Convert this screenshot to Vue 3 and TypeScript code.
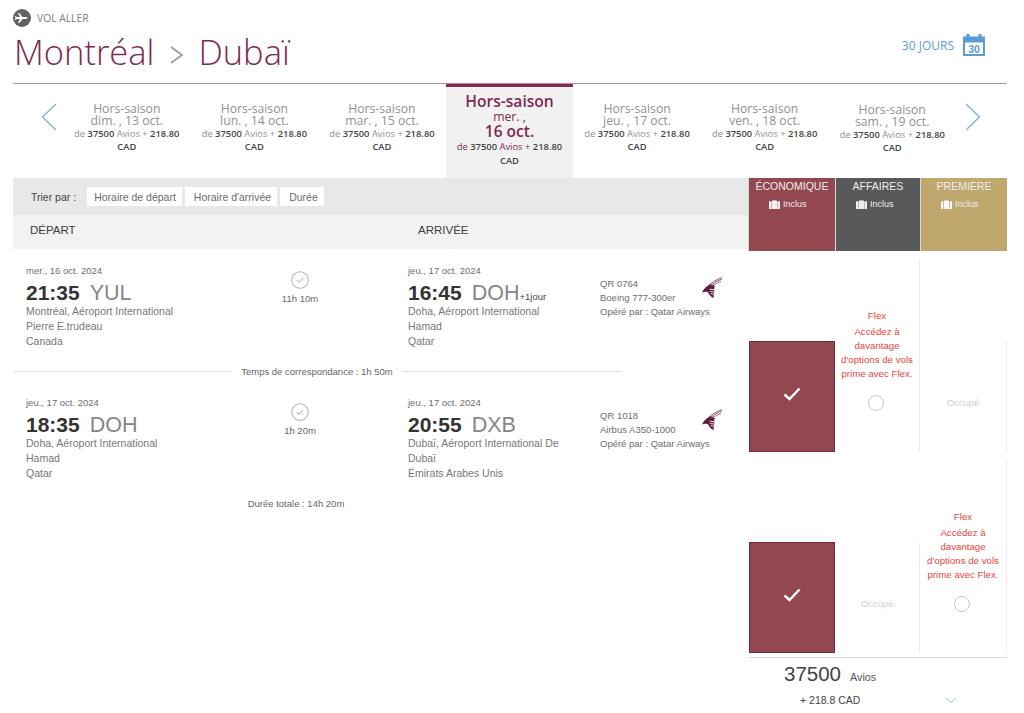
<template>
  <div class="page">
    <header class="head">
      <div class="head-left">
        <div class="leg">
          <svg class="leg-icon" width="18" height="18" viewBox="0 0 18 18">
            <circle cx="9" cy="9" r="9" fill="#626365" />
            <path d="M3.600 8.100h3.200L5 3.900h1.300l3.300 4.200h3.100c1 0 1.700.4 1.700.9s-.7.9-1.700.9H9.600l-3.300 4.200H5l1.800-4.200H3.600l-.8 1.200H2l.5-2.100L2 6.900h.8z" fill="#fff" />
          </svg>
          <span>VOL ALLER</span>
        </div>
        <h1 class="route">
          <span>Montréal</span>
          <svg class="route-sep" width="14" height="20" viewBox="0 0 14 20">
            <path d="M1 2l11 8-11 8" fill="none" stroke="#9a9a9a" stroke-width="1.800" />
          </svg>
          <span>Dubaï</span>
        </h1>
      </div>
      <div class="days">
        <span>30 JOURS</span>
        <svg width="24" height="24" viewBox="0 0 24 24">
          <path d="M1 3.500h22V23H1z" fill="#5b9bd8" />
          <rect x="3" y="9.500" width="18" height="11.500" fill="#fff" />
          <circle cx="6" cy="2.500" r="1.800" fill="#5b9bd8" />
          <circle cx="18" cy="2.500" r="1.800" fill="#5b9bd8" />
          <text x="12" y="19.500" text-anchor="middle" class="cal-num">30</text>
        </svg>
      </div>
    </header>

    <nav class="dates">
      <svg class="arrow" width="16" height="28" viewBox="0 0 16 28">
        <path d="M15 1L1.500 14 15 27" fill="none" stroke="#7fb0de" stroke-width="1.300" />
      </svg>
      <div class="date-list">
        <div v-for="d in dates" :key="d.day" class="date" :class="{ active: d.active, low: d.low }">
          <div class="season">Hors-saison</div>
          <template v-if="d.active">
            <div class="weekday">{{ d.week }} ,</div>
            <div class="day">{{ d.day }}</div>
          </template>
          <div v-else class="weekday">{{ d.week }} , {{ d.day }}</div>
          <div class="price">de <b>37500</b> Avios + <b>218.80</b></div>
          <div class="cad">CAD</div>
        </div>
      </div>
      <svg class="arrow" width="16" height="28" viewBox="0 0 16 28">
        <path d="M1 1l13.500 13L1 27" fill="none" stroke="#7fb0de" stroke-width="1.300" />
      </svg>
    </nav>

    <main class="main">
      <section class="flights">
        <div class="sort">
          <span class="sort-label">Trier par :</span>
          <button v-for="s in sorts" :key="s" class="sort-btn">{{ s }}</button>
        </div>
        <div class="cols">
          <span>DÉPART</span>
          <span>ARRIVÉE</span>
        </div>

        <template v-for="(seg, i) in segments" :key="seg.flight">
          <div class="segment">
            <div class="place">
              <div class="when">{{ seg.depDate }}</div>
              <div class="time"><b>{{ seg.depTime }}</b><span class="code">{{ seg.depCode }}</span></div>
              <div class="addr">{{ seg.depAddr }}</div>
              <div class="addr">{{ seg.depCountry }}</div>
            </div>
            <div class="duration">
              <svg width="18" height="18" viewBox="0 0 18 18">
                <circle cx="9" cy="9" r="8.200" fill="none" stroke="#b5b5b5" stroke-width="1.100" />
                <path d="M5.800 9l2.300 2.300 4.200-4.300" fill="none" stroke="#a5a5a5" stroke-width="1" />
              </svg>
              <span>{{ seg.duration }}</span>
            </div>
            <div class="place arr">
              <div class="when">{{ seg.arrDate }}</div>
              <div class="time">
                <b>{{ seg.arrTime }}</b><span class="code">{{ seg.arrCode }}</span><small v-if="seg.plusDay">+1jour</small>
              </div>
              <div class="addr">{{ seg.arrAddr }}</div>
              <div class="addr">{{ seg.arrCountry }}</div>
            </div>
            <div class="info">
              <div class="info-text">
                <div>{{ seg.flight }}</div>
                <div>{{ seg.plane }}</div>
                <div>Opéré par : Qatar Airways</div>
              </div>
              <svg class="oryx" width="20" height="21" viewBox="0 0 20 21">
                <path d="M0 15.500C1.500 12 4.500 9 8 7.500c2-.5 3.500.5 5 2.500l-1 .8.800 1.700-1 .5.900 2-1 .5.700 1.800-1 .4.500 3.300C8.500 20 7 17.500 6 15.300 4 14.500 2 14.800 0 15.500z" fill="#5f1b3e" />
                <path d="M6.500 8.500C10 5 15 2.500 20 .5M8 9c4-3.500 8-5.500 12-7M9.500 9.500c3.500-2.500 6.500-4 9.500-5" fill="none" stroke="#7b3a5c" stroke-width=".8" />
                <path d="M7.500 12.300l5 .3M7.800 14.500l4.800.5M8.500 16.700l3.800.3" stroke="#fff" stroke-width=".8" />
              </svg>
            </div>
          </div>
          <div v-if="i === 0" class="layover">
            <span>Temps de correspondance : 1h 50m</span>
          </div>
        </template>
        <div class="total">Durée totale : 14h 20m</div>
      </section>

      <aside class="fares">
        <div class="cabins">
          <div v-for="c in cabins" :key="c.name" class="cabin" :class="c.cls">
            <div class="cabin-name">{{ c.name }}</div>
            <div class="bag">
              <svg width="11" height="9" viewBox="0 0 11 9">
                <path d="M3.500 1.500V.5h4v1M0 1.500h11V9H0z" fill="#fff" fill-opacity=".9" stroke="#fff" stroke-width=".4" stroke-opacity=".6" />
                <path d="M2.500 1.500V9M8.500 1.500V9" stroke="#777" stroke-width=".7" opacity=".6" />
              </svg>
              <span>Inclus</span>
            </div>
          </div>
        </div>

        <div v-for="(row, r) in fareRows" :key="r" class="fare-row">
          <div class="fare picked">
            <svg width="18" height="14" viewBox="0 0 18 14">
              <path d="M1.500 7.500l5 4.500L16.500 1.500" fill="none" stroke="#fff" stroke-width="2.400" />
            </svg>
          </div>
          <template v-for="kind in row" :key="kind">
            <div v-if="kind === 'flex'" class="fare flex">
              <p class="flex-title">Flex</p>
              <p class="flex-text">Accédez à davantage d'options de vols prime avec Flex.</p>
              <span class="radio"></span>
            </div>
            <div v-else class="fare busy">Occupé</div>
          </template>
        </div>

        <div class="summary">
          <div class="sum-top"><span class="sum-num">37500</span><span class="sum-unit">Avios</span></div>
          <div class="sum-bottom">
            <span>+ 218.8 CAD</span>
            <svg width="12" height="7" viewBox="0 0 12 7">
              <path d="M1 1l5 4.500L11 1" fill="none" stroke="#c6d9ec" stroke-width="1.600" />
            </svg>
          </div>
        </div>
      </aside>
    </main>
  </div>
</template>

<script setup lang="ts">
interface DateCell {
  week: string;
  day: string;
  active?: boolean;
  low?: boolean;
}

interface Segment {
  depDate: string;
  depTime: string;
  depCode: string;
  depAddr: string;
  depCountry: string;
  duration: string;
  arrDate: string;
  arrTime: string;
  arrCode: string;
  arrAddr: string;
  arrCountry: string;
  plusDay?: boolean;
  flight: string;
  plane: string;
}

const dates: DateCell[] = [
  { week: 'dim.', day: '13 oct.' },
  { week: 'lun.', day: '14 oct.' },
  { week: 'mar.', day: '15 oct.' },
  { week: 'mer.', day: '16 oct.', active: true },
  { week: 'jeu.', day: '17 oct.' },
  { week: 'ven.', day: '18 oct.' },
  { week: 'sam.', day: '19 oct.', low: true },
];

const sorts = ['Horaire de départ', "Horaire d'arrivée", 'Durée'];

const segments: Segment[] = [
  {
    depDate: 'mer., 16 oct. 2024',
    depTime: '21:35',
    depCode: 'YUL',
    depAddr: 'Montréal, Aéroport International Pierre E.trudeau',
    depCountry: 'Canada',
    duration: '11h 10m',
    arrDate: 'jeu., 17 oct. 2024',
    arrTime: '16:45',
    arrCode: 'DOH',
    arrAddr: 'Doha, Aéroport International Hamad',
    arrCountry: 'Qatar',
    plusDay: true,
    flight: 'QR 0764',
    plane: 'Boeing 777-300er',
  },
  {
    depDate: 'jeu., 17 oct. 2024',
    depTime: '18:35',
    depCode: 'DOH',
    depAddr: 'Doha, Aéroport International Hamad',
    depCountry: 'Qatar',
    duration: '1h 20m',
    arrDate: 'jeu., 17 oct. 2024',
    arrTime: '20:55',
    arrCode: 'DXB',
    arrAddr: 'Dubaï, Aéroport International De Dubaï',
    arrCountry: 'Émirats Arabes Unis',
    flight: 'QR 1018',
    plane: 'Airbus A350-1000',
  },
];

const cabins = [
  { name: 'ÉCONOMIQUE', cls: 'eco' },
  { name: 'AFFAIRES', cls: 'biz' },
  { name: 'PREMIÈRE', cls: 'first' },
];

// business / first column for each leg
const fareRows = [
  ['flex', 'busy'],
  ['busy', 'flex'],
];
</script>

<style scoped>
.page {
  width: 1024px;
  height: 713px;
  overflow: hidden;
  padding: 0 17px 0 13px;
  box-sizing: border-box;
  font-family: "Liberation Sans", Arial, sans-serif;
  background: #fff;
}

.head {
  height: 83px;
  display: flex;
  justify-content: space-between;
  border-bottom: 1px solid #b78c9e;
  box-sizing: content-box;
}

.leg {
  display: flex;
  align-items: center;
  gap: 6px;
  padding-top: 9px;
  font: 10.300px "Open Sans", sans-serif;
  color: #808080;
}

.route {
  margin: 3px 0 0 1px;
  display: flex;
  align-items: center;
  font: 300 34.500px/44px "Open Sans", sans-serif;
  color: #7f2a52;
}

.route-sep {
  margin: 6px 14px 0 16px;
}

.days {
  display: flex;
  align-items: center;
  gap: 8px;
  height: 24px;
  margin: 33px 21px 0 0;
  font: 12px "Open Sans", sans-serif;
  color: #5b9bd8;
}

.cal-num {
  font: 700 10.500px "Liberation Sans", sans-serif;
  fill: #5b9bd8;
}

.dates {
  height: 94px;
  display: flex;
  align-items: flex-start;
  font-family: "Open Sans", sans-serif;
}

.arrow {
  flex: none;
  margin-top: 19px;
}

.dates .arrow:first-child {
  margin-left: 28px;
  margin-right: 6px;
}

.dates .arrow:last-child {
  margin-left: 9px;
}

.date-list {
  width: 893px;
  flex: none;
  display: grid;
  grid-template-columns: repeat(7, 1fr);
}

.date {
  height: 94px;
  box-sizing: border-box;
  padding-top: 19px;
  text-align: center;
  color: #8f9195;
  font-size: 12.200px;
  line-height: 12px;
}

.date.low {
  padding-top: 20px;
}

.price {
  font-size: 9.400px;
  line-height: 12px;
  color: #8f9195;
  margin-top: 1px;
  white-space: nowrap;
}

.price b,
.cad {
  color: #444;
  font-weight: 600;
}

.cad {
  font-size: 9.400px;
  line-height: 12px;
  margin-top: 1px;
}

.date.active {
  background: #f1f1f2;
  border-top: 3px solid #7f2a52;
  padding-top: 6px;
  color: #7f2a52;
}

.date.active .season {
  font-size: 15.600px;
  font-weight: 600;
  line-height: 17px;
}

.date.active .weekday {
  font-size: 12.200px;
  line-height: 14px;
}

.date.active .day {
  font-size: 15.500px;
  font-weight: 600;
  line-height: 15px;
}

.date.active .price {
  color: #7f2a52;
  margin-top: 1px;
  line-height: 12px;
  padding-top: 1px;
}

.date.active .cad {
  margin-top: 2px;
}

.main {
  display: grid;
  grid-template-columns: 735px 259px;
}

.sort {
  height: 37px;
  background: #e8e8e8;
  display: flex;
  align-items: center;
  gap: 3px;
  padding-left: 18px;
}

.sort-label {
  font-size: 10.500px;
  color: #444;
  margin-right: 8px;
}

.sort-btn {
  height: 19px;
  padding: 0 6px 0 9px;
  border: 0;
  background: #fff;
  font: 10.500px "Liberation Sans", sans-serif;
  color: #6a6a6a;
}

.sort-btn:first-of-type {
  padding-left: 7px;
}

.cols {
  height: 34px;
  box-sizing: border-box;
  padding: 0 0 4px 17px;
  background: #f2f2f2;
  display: grid;
  grid-template-columns: 388px 1fr;
  align-items: center;
  font-size: 11.500px;
  color: #3c3c3c;
}

.segment {
  display: grid;
  grid-template-columns: 214px 120px 240px 1fr;
  padding-left: 13px;
  height: 86px;
  padding-top: 16px;
}

.layover + .segment {
  padding-top: 20px;
}

.place {
  width: 165px;
}

.arr {
  width: 192px;
  padding: 0 24px 0 48px;
  box-sizing: content-box;
}

.arr .addr {
  width: 165px;
}

.when {
  font-size: 9.500px;
  line-height: 12px;
  color: #6d6d6d;
}

.time {
  margin-top: 5px;
  font-size: 21px;
  line-height: 22px;
  color: #333;
  white-space: nowrap;
}

.code {
  margin-left: 10px;
  font-size: 21.500px;
  color: #85868a;
}

.time small {
  font-size: 9.500px;
  line-height: 0;
  color: #444;
}

.addr {
  font-size: 10.500px;
  line-height: 15px;
  color: #777;
}

.duration {
  display: flex;
  flex-direction: column;
  align-items: center;
  gap: 4px;
  padding-top: 6px;
  font-size: 9.500px;
  line-height: 11px;
  color: #666;
}

.info {
  display: flex;
  align-items: flex-start;
  padding-top: 12px;
}

.info-text {
  width: 102px;
  white-space: nowrap;
  font-size: 9.500px;
  line-height: 14px;
  color: #6d6d6d;
}

.layover {
  width: 608px;
  display: flex;
  align-items: center;
  gap: 9px;
  font-size: 9.500px;
  color: #666;
  height: 11px;
  margin-top: 15px;
}

.layover span {
  flex: none;
}

.layover::before,
.layover::after {
  content: "";
  flex: 1;
  border-top: 1px solid #ddd;
}

.total {
  width: 566px;
  text-align: center;
  font-size: 9.500px;
  color: #666;
  margin-top: 15px;
}

.cabins {
  display: grid;
  grid-template-columns: 87px 85px 87px;
  height: 73px;
}

.cabin {
  text-align: center;
  color: #eee;
  padding-top: 2px;
  box-sizing: border-box;
  border-left: 1px solid #d8d8d8;
}

.cabin-name {
  font-size: 10.500px;
  line-height: 13px;
}

.bag {
  display: flex;
  justify-content: flex-start;
  align-items: center;
  gap: 3px;
  margin-top: 6px;
  padding-left: 20px;
  font-size: 9px;
}

.eco {
  background: #93474f;
}

.biz {
  background: #58595b;
}

.first {
  background: #bfa76e;
}

.fare-row {
  display: grid;
  grid-template-columns: 87px 85px 87px;
  height: 193px;
  align-items: end;
  margin-top: 8px;
}

.fare {
  height: 111px;
  box-sizing: border-box;
  border-right: 1px solid #ececec;
}

.picked {
  margin-left: 1px;
  background: #93474f;
  border: 1px solid #6f2c3a;
  display: flex;
  align-items: center;
  justify-content: center;
  padding-bottom: 6px;
}

.busy {
  display: flex;
  align-items: center;
  justify-content: center;
  padding-top: 11px;
  font-size: 9.500px;
  color: #cfcfcf;
}

.fare.flex {
  height: 193px;
  display: flex;
  flex-direction: column;
  align-items: center;
  justify-content: flex-end;
  padding: 0 2px 41px;
  text-align: center;
  color: #e8463c;
  font-size: 9.700px;
  line-height: 14px;
}

.flex-title {
  margin: 0 0 2px;
}

.flex-text {
  margin: 0 0 14px;
}

.radio {
  width: 16px;
  height: 16px;
  box-sizing: border-box;
  border: 1.500px solid #c9c9c9;
  border-radius: 50%;
  margin-left: -2px;
}

.summary {
  margin-top: 4px;
  border-top: 1px solid #ddd;
  margin-left: 1px;
  color: #444;
}

.sum-top {
  display: flex;
  align-items: baseline;
  gap: 9px;
  padding: 3px 0 0 35px;
}

.sum-num {
  font-size: 20.500px;
  line-height: 26px;
}

.sum-unit {
  font-size: 10.800px;
  color: #555;
}

.sum-bottom {
  display: flex;
  align-items: center;
  gap: 85px;
  padding: 7px 0 0 51px;
  font-size: 10.500px;
}
</style>

<style>
html,
body {
  margin: 0;
  background: #fff;
}
</style>
